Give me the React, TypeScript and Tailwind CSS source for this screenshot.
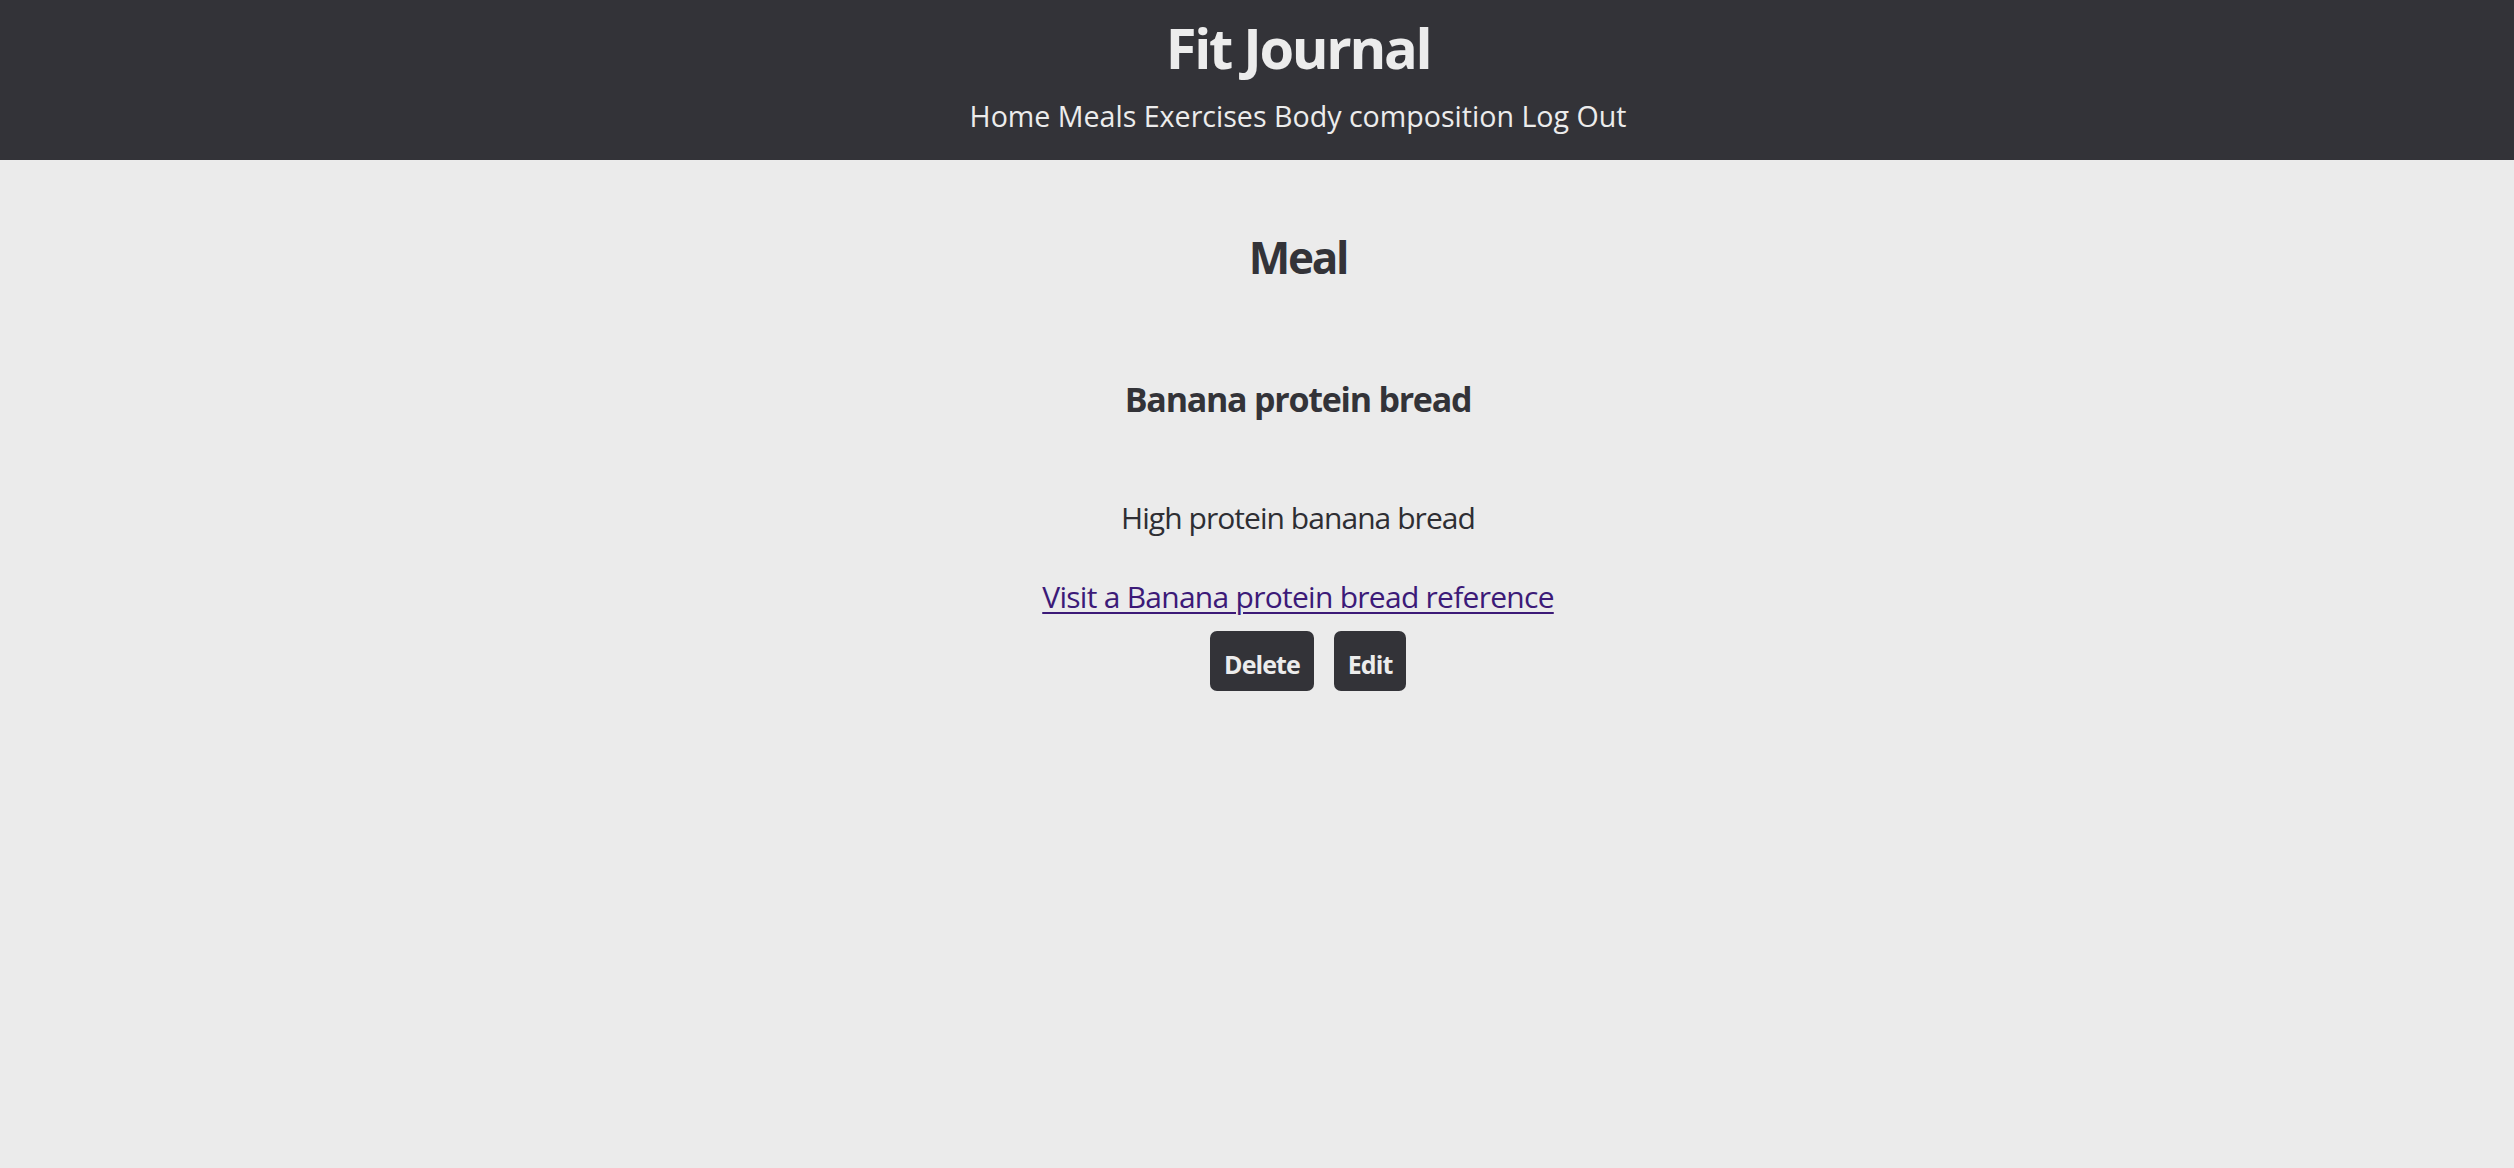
export default function App() {
  return (
    <div className="min-h-[1168px] bg-[#ebebeb] font-['Open_Sans',sans-serif] text-[#333338]">
      <header className="flex flex-col items-center bg-[#333338] pl-[82px] pt-[19.3px] pb-[29px] text-[#ececec]">
        <h1 className="text-[56px] font-bold leading-none tracking-[-2.3px]">Fit Journal</h1>
        <nav className="mt-[26.8px] flex gap-[0.26em] text-[28.6px] leading-none">
          <a href="#">Home</a>
          <a href="#">Meals</a>
          <a href="#">Exercises</a>
          <a href="#">Body composition</a>
          <a href="#">Log Out</a>
        </nav>
      </header>
      <main className="flex flex-col items-center pl-[82px]">
        <h2 className="mt-[75.2px] text-[44px] font-bold leading-none tracking-[-2.2px]">Meal</h2>
        <h3 className="mt-[103.1px] text-[34px] font-bold leading-none tracking-[-1.25px]">
          Banana protein bread
        </h3>
        <p className="mt-[87.1px] text-[30px] leading-none tracking-[-0.95px] text-[#2e2e33]">
          High protein banana bread
        </p>
        <a
          href="#"
          className="mt-[49.3px] text-[30px] leading-none tracking-[-0.73px] text-[#3c1a78] underline decoration-[2px] underline-offset-[4px]"
        >
          Visit a Banana protein bread reference
        </a>
        <div className="mt-[19px] ml-[20px] flex gap-[20px]">
          <button className="h-[60px] w-[104px] rounded-[7px] bg-[#333338] pt-[5.5px] text-[25px] font-bold leading-none tracking-[-0.9px] text-[#ececec]">
            Delete
          </button>
          <button className="h-[60px] w-[72px] rounded-[7px] bg-[#333338] pt-[5.5px] text-[25px] font-bold leading-none tracking-[-0.9px] text-[#ececec]">
            Edit
          </button>
        </div>
      </main>
    </div>
  );
}
